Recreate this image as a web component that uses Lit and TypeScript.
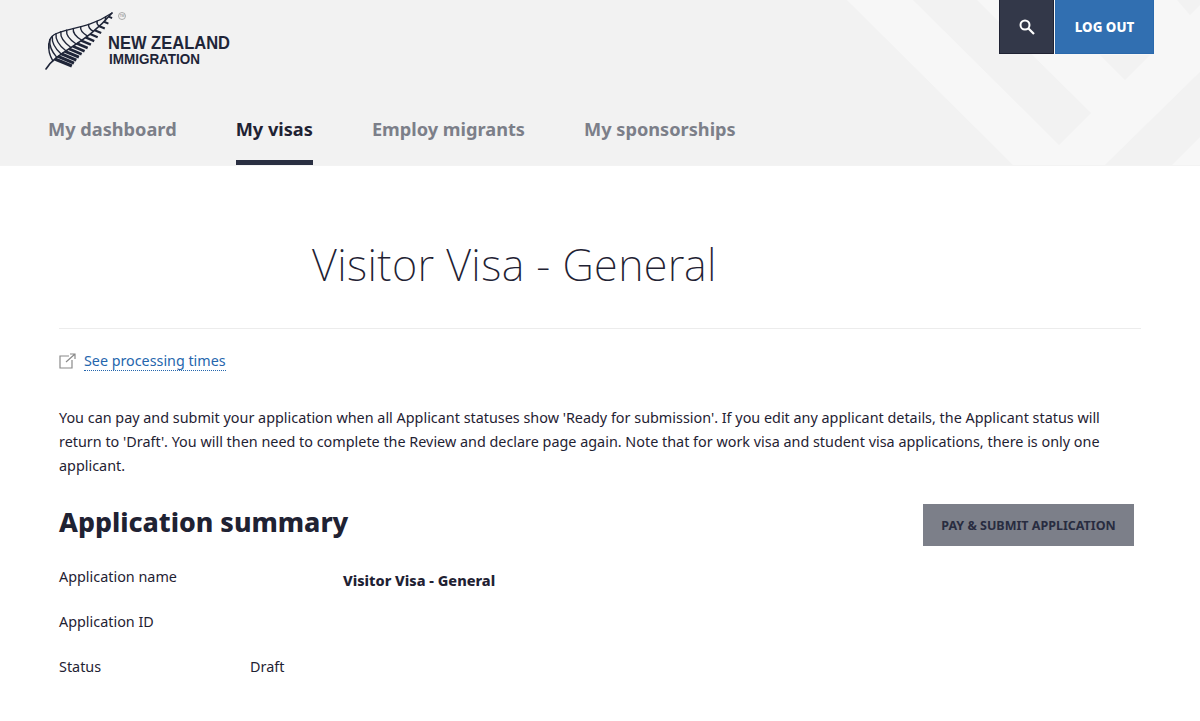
import { LitElement, html, css, svg } from "lit";
import { customElement } from "lit/decorators.js";

const bez = (a: number, b: number, c: number, d: number, t: number) =>
  (1 - t) ** 3 * a + 3 * (1 - t) ** 2 * t * b + 3 * (1 - t) * t ** 2 * c + t ** 3 * d;
const stem = (t: number) => [bez(46, 58, 85, 112, t), bez(69, 50, 45, 13, t)];
const outer = (t: number) => [bez(49, 46, 78, 112, t), bez(48, 24, 36, 13, t)];

const upper = Array.from({ length: 11 }, (_, i) => {
  const t = 0.16 + (i * 0.76) / 10;
  const [x, y] = stem(t);
  const [ox, oy] = outer(0.06 + (i * 0.88) / 10);
  return svg`<path d="M${x} ${y}Q${ox - 1} ${(y + oy) / 2} ${ox} ${oy}" stroke-width="1.4"></path>`;
});
const lower = Array.from({ length: 14 }, (_, i) => {
  const t = 0.2 + (i * 0.76) / 13;
  const [x, y] = stem(t);
  const len = 17 - i * 1.05;
  return svg`<path d="M${x} ${y}L${x + len} ${y + len * 0.42}" stroke-width="${3.2 - i * 0.1}"></path>`;
});

@customElement("app-root")
export class AppRoot extends LitElement {
  static styles = css`
    :host { display: block; height: 721px; overflow: hidden; background: #fff; color: #1f2233; font-family: "Noto Sans", sans-serif; }
    header { position: relative; height: 165px; background: #f2f2f2; overflow: hidden; border-bottom: 1px solid #f3f3f3; box-sizing: content-box; }
    .bg { position: absolute; inset: 0; width: 1200px; height: 165px; }
    .top { position: relative; display: flex; justify-content: space-between; align-items: flex-start; padding: 0 46px 0 45px; height: 101px; }
    .logo { display: block; margin-top: 11px; }
    .logo-text1 { font: 700 18px "Liberation Sans", sans-serif; fill: #1f2538; }
    .logo-text2 { font: 700 14px "Liberation Sans", sans-serif; fill: #1f2538; }
    .tm { font: 400 3.5px "Liberation Sans", sans-serif; fill: #888; }
    .actions { display: flex; gap: 1px; }
    .search { width: 55px; height: 54px; box-sizing: border-box; background: #333849; border: 1px solid #1f2233; border-top: 0; display: flex; align-items: center; justify-content: center; }
    .logout { width: 99px; height: 54px; box-sizing: border-box; background: #316fb1; border: 1px solid #2a69ad; border-top: 0; color: #fff; font: 800 13.3px "Noto Sans", sans-serif; display: flex; align-items: center; justify-content: center; }
    nav { position: relative; display: flex; gap: 59px; padding-left: 48px; height: 64px; font: 700 18.2px "Noto Sans", sans-serif; color: #7c7f89; }
    nav a { display: flex; align-items: flex-start; padding-top: 16px; box-sizing: border-box; height: 64px; }
    nav a.on { color: #1f2233; border-bottom: 5px solid #2a2f42; }
    main { padding: 0 59px; }
    h1 { margin: 0; height: 163px; box-sizing: border-box; padding: 69px 0 0 253px; font: 200 43.4px/60px "Noto Sans", sans-serif; letter-spacing: .4px; color: #1f2233; border-bottom: 1px solid #ececec; }
    .link { display: flex; align-items: center; gap: 8px; margin-top: 20px; height: 24px; }
    .link a { color: #2566ad; font-size: 14.3px; border-bottom: 1px dotted #2566ad; line-height: 18px; }
    p { margin: 33px 0 0; font-size: 14.38px; line-height: 24px; color: #1f2233; }
    .sum { display: flex; justify-content: space-between; align-items: flex-start; margin-top: 24px; padding-right: 7px; height: 44px; }
    h2 { margin: 0; font: 800 26.7px/40px "Noto Sans", sans-serif; color: #1f2233; }
    .pay { width: 211px; height: 42px; margin-top: 2px; background: #7c7f89; border: 1px solid #7c7f89; box-sizing: border-box; color: #282c40; font: 700 12.5px "Noto Sans", sans-serif; display: flex; align-items: center; justify-content: center; }
    dl { margin: 21px 0 0; }
    .row { display: flex; height: 45px; font-size: 14.38px; line-height: 20px; }
    .k { width: 284px; }
    .k2 { width: 191px; }
    .v { font-weight: 800; font-size: 14.5px; margin-top: 3px; }
  `;

  render() {
    return html`
      <header>
        <svg class="bg" viewBox="0 0 1200 165">
          <polygon fill="#f7f7f7" points="847,0 1200,0 1200,165 1013,165"></polygon>
          <g fill="#f2f2f2">
            <polygon points="913,0 977,0 1091,113 1059,145"></polygon>
            <polygon points="1100,55 1125,80 1150,55"></polygon>
            <polygon points="1105,165 1200,72 1200,137 1172,165"></polygon>
            <polygon points="1177,0 1190,15 1200,5 1200,0"></polygon>
          </g>
        </svg>
        <div class="top">
          <svg class="logo" width="210" height="60" viewBox="45 11 210 60">
            <g fill="none" stroke="#1f2538" stroke-linecap="round">
              <path d="M46 69C58 50 85 45 112 13" stroke-width="1.6"></path>
              <path d="M49 48C46 24 78 36 112 13" stroke-width="1.3"></path>
              ${upper}
              <g stroke-linecap="butt">${lower}</g>
            </g>
            <circle cx="122" cy="16" r="3.5" fill="none" stroke="#999" stroke-width=".8"></circle>
            <text class="tm" x="122" y="17.2" text-anchor="middle">TM</text>
            <text class="logo-text1" x="108" y="49" textLength="122" lengthAdjust="spacingAndGlyphs">NEW ZEALAND</text>
            <text class="logo-text2" x="109" y="64" textLength="91" lengthAdjust="spacingAndGlyphs">IMMIGRATION</text>
          </svg>
          <div class="actions">
            <div class="search">
              <svg width="18" height="18" viewBox="0 0 18 18" fill="none" stroke="#fff">
                <circle cx="7" cy="7" r="4.5" stroke-width="2"></circle>
                <path d="M10.5 10.5l5.5 5.5" stroke-width="2.2"></path>
              </svg>
            </div>
            <div class="logout">LOG OUT</div>
          </div>
        </div>
        <nav>
          <a>My dashboard</a>
          <a class="on">My visas</a>
          <a>Employ migrants</a>
          <a>My sponsorships</a>
        </nav>
      </header>
      <main>
        <h1>Visitor Visa - General</h1>
        <div class="link">
          <svg width="17" height="16" viewBox="0 0 17 16" fill="none" stroke="#8a8a8a" stroke-width="1.2">
            <path d="M10 3H1v12h12V7"></path>
            <path d="M7 9l9-8M11 1h5v5"></path>
          </svg>
          <a>See processing times</a>
        </div>
        <p>You can pay and submit your application when all Applicant statuses show 'Ready for submission'. If you edit any applicant details, the Applicant status will return to 'Draft'. You will then need to complete the Review and declare page again. Note that for work visa and student visa applications, there is only one applicant.</p>
        <div class="sum">
          <h2>Application summary</h2>
          <div class="pay">PAY &amp; SUBMIT APPLICATION</div>
        </div>
        <dl>
          <div class="row"><span class="k">Application name</span><span class="v">Visitor Visa - General</span></div>
          <div class="row"><span class="k">Application ID</span></div>
          <div class="row"><span class="k2">Status</span><span>Draft</span></div>
        </dl>
      </main>
    `;
  }
}
